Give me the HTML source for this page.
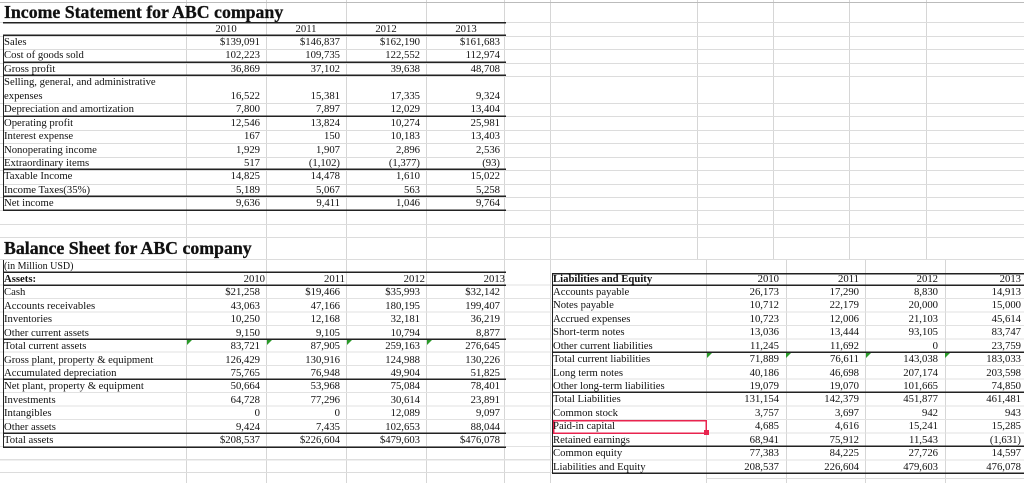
<!DOCTYPE html>
<html><head><meta charset="utf-8"><style>
*{margin:0;padding:0;box-sizing:border-box}
body{width:1024px;height:483px;overflow:hidden;background:#fff;position:relative;font-family:"Liberation Serif",serif;font-size:10.7px;color:#111}
.vl{position:absolute;width:1px;background:#d6d6d6}
.hl{position:absolute;height:1px;background:#dcdcdc}
.t{position:absolute}
.r{display:flex;height:13.45px;line-height:13.45px;white-space:nowrap;position:relative}
.r>div{overflow:visible}
.b{box-shadow:inset 0 -1.5px #222}
.n{text-align:right}
.c{text-align:center}
.title{position:absolute;font-weight:bold;font-size:17.8px;left:4px;line-height:22px;-webkit-text-stroke:0.3px #111}
.tri{position:absolute;width:0;height:0;border-top:5px solid #2a9a2a;border-right:5px solid transparent}
</style></head><body>
<div class="vl" style="left:186px;top:0;height:483px"></div>
<div class="vl" style="left:266px;top:0;height:483px"></div>
<div class="vl" style="left:346px;top:0;height:483px"></div>
<div class="vl" style="left:426px;top:0;height:483px"></div>
<div class="vl" style="left:504px;top:0;height:483px"></div>
<div class="vl" style="left:550px;top:0;height:483px"></div>
<div class="vl" style="left:697px;top:0;height:260px"></div>
<div class="vl" style="left:773px;top:0;height:260px"></div>
<div class="vl" style="left:849px;top:0;height:260px"></div>
<div class="vl" style="left:926px;top:0;height:260px"></div>
<div class="vl" style="left:706px;top:260px;height:223px"></div>
<div class="vl" style="left:786px;top:260px;height:223px"></div>
<div class="vl" style="left:865px;top:260px;height:223px"></div>
<div class="vl" style="left:945px;top:260px;height:223px"></div>
<div class="hl" style="left:0;top:2px;width:1024px;background:#bbb"></div>
<div class="hl" style="left:0;top:22px;width:1024px"></div>
<div class="hl" style="left:0;top:36px;width:1024px"></div>
<div class="hl" style="left:0;top:49px;width:1024px"></div>
<div class="hl" style="left:0;top:63px;width:1024px"></div>
<div class="hl" style="left:0;top:76px;width:1024px"></div>
<div class="hl" style="left:0;top:103px;width:1024px"></div>
<div class="hl" style="left:0;top:116px;width:1024px"></div>
<div class="hl" style="left:0;top:130px;width:1024px"></div>
<div class="hl" style="left:0;top:143px;width:1024px"></div>
<div class="hl" style="left:0;top:157px;width:1024px"></div>
<div class="hl" style="left:0;top:170px;width:1024px"></div>
<div class="hl" style="left:0;top:184px;width:1024px"></div>
<div class="hl" style="left:0;top:197px;width:1024px"></div>
<div class="hl" style="left:0;top:210px;width:1024px"></div>
<div class="hl" style="left:0;top:224px;width:1024px"></div>
<div class="hl" style="left:0;top:237px;width:1024px"></div>
<div class="hl" style="left:0;top:259px;width:1024px"></div>
<div class="hl" style="left:0;top:459px;width:552px"></div>
<div class="hl" style="left:0;top:472px;width:552px"></div>
<div class="hl" style="left:706px;top:478px;width:318px"></div>
<div style="position:absolute;left:0;top:272px;width:1024px;height:200px;background:repeating-linear-gradient(to bottom,transparent 0,transparent 12.45px,#e2e2e2 12.45px,#e2e2e2 13.45px)"></div>

<div class="title" style="top:1px">Income Statement for ABC company</div>
<div class="t" style="left:3px;top:22px;width:503px;box-shadow:inset 0 1.5px #222">
<div class="r b" style="height:14px;line-height:14px"><div style="width:183px"></div><div class="c" style="width:80px">2010</div><div class="c" style="width:80px">2011</div><div class="c" style="width:80px">2012</div><div class="c" style="width:80px">2013</div></div>
</div>
<div class="t" style="left:3px;top:36px;width:503px;border-left:1px solid #222">
<div class="r"><div style="width:183px">Sales</div><div class="n" style="width:73px">$139,091</div><div class="n" style="width:80px">$146,837</div><div class="n" style="width:80px">$162,190</div><div class="n" style="width:80px">$161,683</div></div>
<div class="r b"><div style="width:183px">Cost of goods sold</div><div class="n" style="width:73px">102,223</div><div class="n" style="width:80px">109,735</div><div class="n" style="width:80px">122,552</div><div class="n" style="width:80px">112,974</div></div>
<div class="r b"><div style="width:183px">Gross profit</div><div class="n" style="width:73px">36,869</div><div class="n" style="width:80px">37,102</div><div class="n" style="width:80px">39,638</div><div class="n" style="width:80px">48,708</div></div>
<div class="r"><div style="width:183px">Selling, general, and administrative</div></div>
<div class="r"><div style="width:183px">expenses</div><div class="n" style="width:73px">16,522</div><div class="n" style="width:80px">15,381</div><div class="n" style="width:80px">17,335</div><div class="n" style="width:80px">9,324</div></div>
<div class="r b"><div style="width:183px">Depreciation and amortization</div><div class="n" style="width:73px">7,800</div><div class="n" style="width:80px">7,897</div><div class="n" style="width:80px">12,029</div><div class="n" style="width:80px">13,404</div></div>
<div class="r"><div style="width:183px">Operating profit</div><div class="n" style="width:73px">12,546</div><div class="n" style="width:80px">13,824</div><div class="n" style="width:80px">10,274</div><div class="n" style="width:80px">25,981</div></div>
<div class="r"><div style="width:183px">Interest expense</div><div class="n" style="width:73px">167</div><div class="n" style="width:80px">150</div><div class="n" style="width:80px">10,183</div><div class="n" style="width:80px">13,403</div></div>
<div class="r"><div style="width:183px">Nonoperating income</div><div class="n" style="width:73px">1,929</div><div class="n" style="width:80px">1,907</div><div class="n" style="width:80px">2,896</div><div class="n" style="width:80px">2,536</div></div>
<div class="r b"><div style="width:183px">Extraordinary items</div><div class="n" style="width:73px">517</div><div class="n" style="width:80px">(1,102)</div><div class="n" style="width:80px">(1,377)</div><div class="n" style="width:80px">(93)</div></div>
<div class="r"><div style="width:183px">Taxable Income</div><div class="n" style="width:73px">14,825</div><div class="n" style="width:80px">14,478</div><div class="n" style="width:80px">1,610</div><div class="n" style="width:80px">15,022</div></div>
<div class="r b"><div style="width:183px">Income Taxes(35%)</div><div class="n" style="width:73px">5,189</div><div class="n" style="width:80px">5,067</div><div class="n" style="width:80px">563</div><div class="n" style="width:80px">5,258</div></div>
<div class="r b"><div style="width:183px">Net income</div><div class="n" style="width:73px">9,636</div><div class="n" style="width:80px">9,411</div><div class="n" style="width:80px">1,046</div><div class="n" style="width:80px">9,764</div></div>
</div>

<div class="title" style="top:237px">Balance Sheet for ABC company</div>
<div class="t" style="left:3px;top:259.5px;width:503px;border-left:1px solid #222">
<div class="r b" style="font-size:10px"><div>(in Million USD)</div></div>
<div class="r b"><div style="width:183px;font-weight:bold">Assets:</div><div class="n" style="width:78px">2010</div><div class="n" style="width:80px">2011</div><div class="n" style="width:80px">2012</div><div class="n" style="width:80px">2013</div></div>
<div class="r"><div style="width:183px">Cash</div><div class="n" style="width:73px">$21,258</div><div class="n" style="width:80px">$19,466</div><div class="n" style="width:80px">$35,993</div><div class="n" style="width:80px">$32,142</div></div>
<div class="r"><div style="width:183px">Accounts receivables</div><div class="n" style="width:73px">43,063</div><div class="n" style="width:80px">47,166</div><div class="n" style="width:80px">180,195</div><div class="n" style="width:80px">199,407</div></div>
<div class="r"><div style="width:183px">Inventories</div><div class="n" style="width:73px">10,250</div><div class="n" style="width:80px">12,168</div><div class="n" style="width:80px">32,181</div><div class="n" style="width:80px">36,219</div></div>
<div class="r b"><div style="width:183px">Other current assets</div><div class="n" style="width:73px">9,150</div><div class="n" style="width:80px">9,105</div><div class="n" style="width:80px">10,794</div><div class="n" style="width:80px">8,877</div></div>
<div class="r"><div style="width:183px">Total current assets</div><div class="n" style="width:73px">83,721</div><div class="n" style="width:80px">87,905</div><div class="n" style="width:80px">259,163</div><div class="n" style="width:80px">276,645</div></div>
<div class="r"><div style="width:183px">Gross plant, property &amp; equipment</div><div class="n" style="width:73px">126,429</div><div class="n" style="width:80px">130,916</div><div class="n" style="width:80px">124,988</div><div class="n" style="width:80px">130,226</div></div>
<div class="r b"><div style="width:183px">Accumulated depreciation</div><div class="n" style="width:73px">75,765</div><div class="n" style="width:80px">76,948</div><div class="n" style="width:80px">49,904</div><div class="n" style="width:80px">51,825</div></div>
<div class="r"><div style="width:183px">Net plant, property &amp; equipment</div><div class="n" style="width:73px">50,664</div><div class="n" style="width:80px">53,968</div><div class="n" style="width:80px">75,084</div><div class="n" style="width:80px">78,401</div></div>
<div class="r"><div style="width:183px">Investments</div><div class="n" style="width:73px">64,728</div><div class="n" style="width:80px">77,296</div><div class="n" style="width:80px">30,614</div><div class="n" style="width:80px">23,891</div></div>
<div class="r"><div style="width:183px">Intangibles</div><div class="n" style="width:73px">0</div><div class="n" style="width:80px">0</div><div class="n" style="width:80px">12,089</div><div class="n" style="width:80px">9,097</div></div>
<div class="r b"><div style="width:183px">Other assets</div><div class="n" style="width:73px">9,424</div><div class="n" style="width:80px">7,435</div><div class="n" style="width:80px">102,653</div><div class="n" style="width:80px">88,044</div></div>
<div class="r b"><div style="width:183px">Total assets</div><div class="n" style="width:73px">$208,537</div><div class="n" style="width:80px">$226,604</div><div class="n" style="width:80px">$479,603</div><div class="n" style="width:80px">$476,078</div></div>
</div>

<div class="t" style="left:552px;top:272.5px;width:472px;border-left:1px solid #222;box-shadow:inset 0 1.5px #222">
<div class="r b"><div style="width:154px;font-weight:bold">Liabilities and Equity</div><div class="n" style="width:72px">2010</div><div class="n" style="width:80px">2011</div><div class="n" style="width:79px">2012</div><div class="n" style="width:83px">2013</div></div>
<div class="r"><div style="width:154px">Accounts payable</div><div class="n" style="width:72px">26,173</div><div class="n" style="width:80px">17,290</div><div class="n" style="width:79px">8,830</div><div class="n" style="width:83px">14,913</div></div>
<div class="r"><div style="width:154px">Notes payable</div><div class="n" style="width:72px">10,712</div><div class="n" style="width:80px">22,179</div><div class="n" style="width:79px">20,000</div><div class="n" style="width:83px">15,000</div></div>
<div class="r"><div style="width:154px">Accrued expenses</div><div class="n" style="width:72px">10,723</div><div class="n" style="width:80px">12,006</div><div class="n" style="width:79px">21,103</div><div class="n" style="width:83px">45,614</div></div>
<div class="r"><div style="width:154px">Short-term notes</div><div class="n" style="width:72px">13,036</div><div class="n" style="width:80px">13,444</div><div class="n" style="width:79px">93,105</div><div class="n" style="width:83px">83,747</div></div>
<div class="r b"><div style="width:154px">Other current liabilities</div><div class="n" style="width:72px">11,245</div><div class="n" style="width:80px">11,692</div><div class="n" style="width:79px">0</div><div class="n" style="width:83px">23,759</div></div>
<div class="r"><div style="width:154px">Total current liabilities</div><div class="n" style="width:72px">71,889</div><div class="n" style="width:80px">76,611</div><div class="n" style="width:79px">143,038</div><div class="n" style="width:83px">183,033</div></div>
<div class="r"><div style="width:154px">Long term notes</div><div class="n" style="width:72px">40,186</div><div class="n" style="width:80px">46,698</div><div class="n" style="width:79px">207,174</div><div class="n" style="width:83px">203,598</div></div>
<div class="r b"><div style="width:154px">Other long-term liabilities</div><div class="n" style="width:72px">19,079</div><div class="n" style="width:80px">19,070</div><div class="n" style="width:79px">101,665</div><div class="n" style="width:83px">74,850</div></div>
<div class="r"><div style="width:154px">Total Liabilities</div><div class="n" style="width:72px">131,154</div><div class="n" style="width:80px">142,379</div><div class="n" style="width:79px">451,877</div><div class="n" style="width:83px">461,481</div></div>
<div class="r"><div style="width:154px">Common stock</div><div class="n" style="width:72px">3,757</div><div class="n" style="width:80px">3,697</div><div class="n" style="width:79px">942</div><div class="n" style="width:83px">943</div></div>
<div class="r"><div style="width:154px;box-shadow:inset 0 0 0 1.5px #e8244f">Paid-in capital</div><div class="n" style="width:72px">4,685</div><div class="n" style="width:80px">4,616</div><div class="n" style="width:79px">15,241</div><div class="n" style="width:83px">15,285</div></div>
<div class="r b"><div style="width:154px">Retained earnings</div><div class="n" style="width:72px">68,941</div><div class="n" style="width:80px">75,912</div><div class="n" style="width:79px">11,543</div><div class="n" style="width:83px">(1,631)</div></div>
<div class="r"><div style="width:154px">Common equity</div><div class="n" style="width:72px">77,383</div><div class="n" style="width:80px">84,225</div><div class="n" style="width:79px">27,726</div><div class="n" style="width:83px">14,597</div></div>
<div class="r b"><div style="width:154px">Liabilities and Equity</div><div class="n" style="width:72px">208,537</div><div class="n" style="width:80px">226,604</div><div class="n" style="width:79px">479,603</div><div class="n" style="width:83px">476,078</div></div>
</div>
<div style="position:absolute;left:704px;top:430px;width:5px;height:5px;background:#e8244f"></div>
<div class="tri" style="left:187px;top:340px"></div>
<div class="tri" style="left:267px;top:340px"></div>
<div class="tri" style="left:347px;top:340px"></div>
<div class="tri" style="left:427px;top:340px"></div>
<div class="tri" style="left:707px;top:353px"></div>
<div class="tri" style="left:786px;top:353px"></div>
<div class="tri" style="left:866px;top:353px"></div>
<div class="tri" style="left:945px;top:353px"></div>
</body></html>
